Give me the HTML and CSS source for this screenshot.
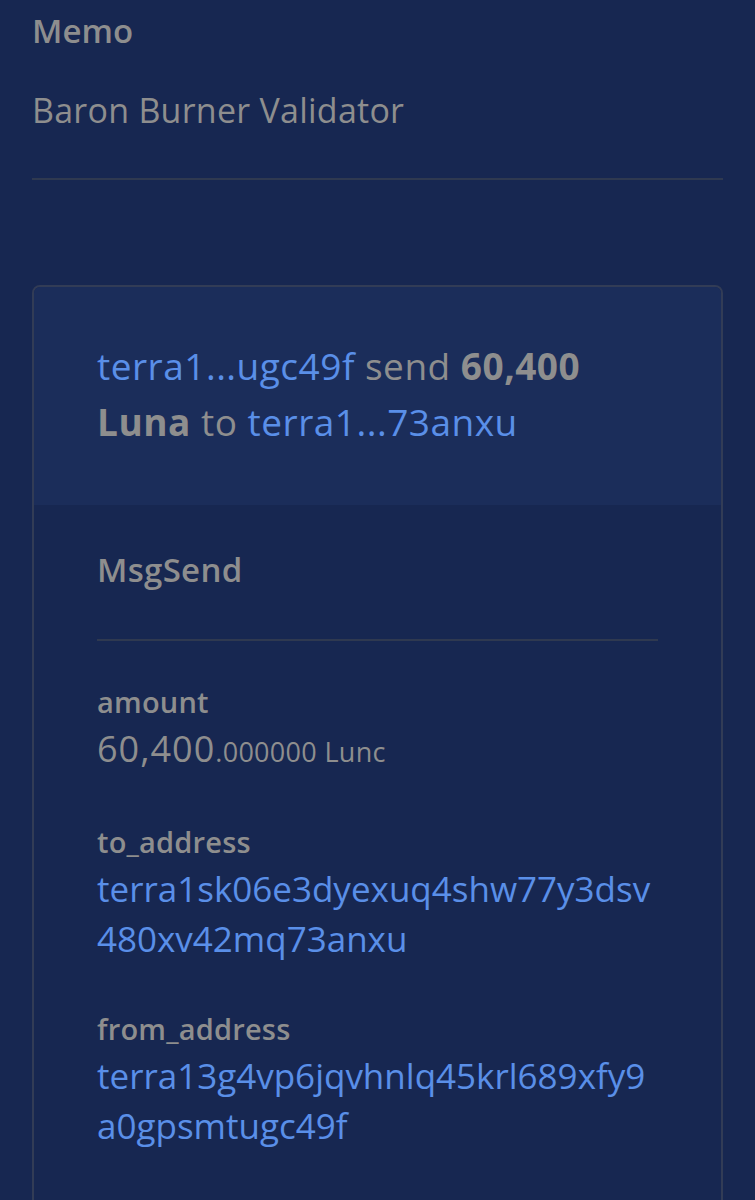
FILE: index.html
```html
<!DOCTYPE html>
<html lang="en">

<head>
    <meta charset="UTF-8">
    <meta name="viewport" content="width=device-width, initial-scale=1.0">
    <title>Transaction</title>
    <link rel="stylesheet" href="styles.css">
</head>

<body>
    <div class="memo">
        <h3 class="memo-label">Memo</h3>
        <p class="memo-text">Baron Burner Validator</p>
    </div>

    <div class="msg-card">
        <div class="msg-summary">
            <a href="#" class="addr">terra1...ugc49f</a> send <strong>60,400 Luna</strong> to <a href="#" class="addr">terra1...73anxu</a>
        </div>

        <div class="msg-body">
            <h3 class="msg-type">MsgSend</h3>

            <div class="field">
                <div class="field-label">amount</div>
                <div class="field-value amount">60,400<small>.000000 Lunc</small></div>
            </div>

            <div class="field">
                <div class="field-label">to_address</div>
                <a href="#" class="field-value addr">terra1sk06e3dyexuq4shw77y3dsv<wbr>480xv42mq73anxu</a>
            </div>

            <div class="field">
                <div class="field-label">from_address</div>
                <a href="#" class="field-value addr">terra13g4vp6jqvhnlq45krl689xfy9<wbr>a0gpsmtugc49f</a>
            </div>
        </div>
    </div>
</body>

</html>
```

FILE: styles.css
```css
body {
    font-family: "Open Sans", Arial, sans-serif;
    background-color: #172751;
    color: #8e8e8e;
    margin: 0;
    padding: 0 32px;
}

a {
    text-decoration: none;
}

.addr {
    color: #5a8fe8;
}

.memo {
    border-bottom: 2px solid #2f3950;
    padding: 8px 0 45px;
}

.memo-label {
    font-size: 33px;
    font-weight: 600;
    margin: 0;
    line-height: 46px;
}

.memo-text {
    font-size: 34px;
    letter-spacing: 0.25px;
    margin: 33px 0 0;
    line-height: 46px;
}

.msg-card {
    margin-top: 105px;
    border: 2px solid #323c56;
    border-radius: 8px;
    overflow: hidden;
    min-height: 1000px;
}

.msg-summary {
    background-color: #1b2d5a;
    padding: 51px 63px 55px;
    font-size: 37px;
    letter-spacing: 0.5px;
    line-height: 56px;
}

.msg-summary strong {
    font-weight: 700;
}

.msg-body {
    padding: 42px 63px;
}

.msg-type {
    font-size: 33px;
    font-weight: 600;
    letter-spacing: 0.3px;
    margin: 0 0 41px;
    line-height: 46px;
    padding-bottom: 46px;
    border-bottom: 2px solid #2f3950;
}

.field {
    margin-bottom: 45px;
}

.field-label {
    font-size: 29px;
    font-weight: 600;
    letter-spacing: 0.2px;
    line-height: 40px;
    margin-bottom: 2px;
}

.field-value {
    display: block;
    font-size: 35px;
    line-height: 50px;
}

.amount {
    font-size: 36px;
    letter-spacing: 1px;
}

.amount small {
    font-size: 27px;
    letter-spacing: 0.3px;
}
```
